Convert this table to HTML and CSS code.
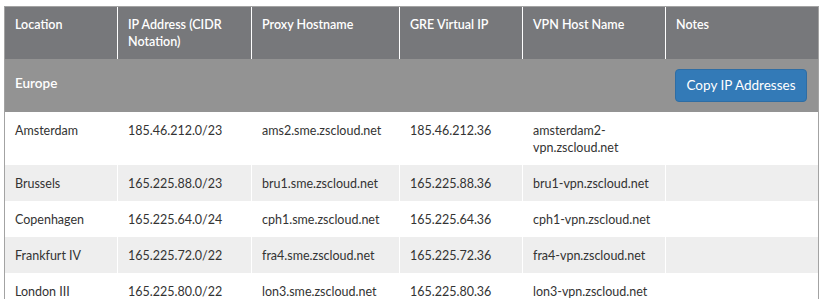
FILE: index.html
```html
<!DOCTYPE html>
<html>
<head>
<meta charset="utf-8">
<link rel="stylesheet" href="styles.css">
</head>
<body>
<div class="wrap">
<table class="ip-table">
  <colgroup>
    <col class="c1"><col class="c2"><col class="c3"><col class="c4"><col class="c5"><col class="c6">
  </colgroup>
  <thead>
    <tr>
      <th>Location</th>
      <th>IP Address (CIDR Notation)</th>
      <th>Proxy Hostname</th>
      <th>GRE Virtual IP</th>
      <th>VPN Host Name</th>
      <th>Notes</th>
    </tr>
  </thead>
  <tbody>
    <tr class="region">
      <td colspan="5" class="region-name">Europe</td>
      <td class="region-action"><button class="copy-btn">Copy IP Addresses</button></td>
    </tr>
    <tr>
      <td>Amsterdam</td><td>185.46.212.0/23</td><td>ams2.sme.zscloud.net</td><td>185.46.212.36</td><td>amsterdam2-<br>vpn.zscloud.net</td><td></td>
    </tr>
    <tr class="alt">
      <td>Brussels</td><td>165.225.88.0/23</td><td>bru1.sme.zscloud.net</td><td>165.225.88.36</td><td>bru1-vpn.zscloud.net</td><td></td>
    </tr>
    <tr>
      <td>Copenhagen</td><td>165.225.64.0/24</td><td>cph1.sme.zscloud.net</td><td>165.225.64.36</td><td>cph1-vpn.zscloud.net</td><td></td>
    </tr>
    <tr class="alt">
      <td>Frankfurt IV</td><td>165.225.72.0/22</td><td>fra4.sme.zscloud.net</td><td>165.225.72.36</td><td>fra4-vpn.zscloud.net</td><td></td>
    </tr>
    <tr>
      <td>London III</td><td>165.225.80.0/22</td><td>lon3.sme.zscloud.net</td><td>165.225.80.36</td><td>lon3-vpn.zscloud.net</td><td></td>
    </tr>
  </tbody>
</table>
</div>
</body>
</html>
```
FILE: styles.css
```css
html, body {
  margin: 0;
  padding: 0;
  background: #ffffff;
  overflow: hidden;
}
.wrap {
  padding: 6px 0 0 4px;
}
.ip-table {
  width: 815px;
  table-layout: fixed;
  border-collapse: separate;
  border-spacing: 0;
  border: 1px solid #a3a3a3;
  border-bottom: none;
  font-family: "Lato", "Liberation Sans", sans-serif;
  font-size: 12.5px;
  color: #333333;
}
.c1 { width: 112px; }
.c2 { width: 134px; }
.c3 { width: 148px; }
.c4 { width: 123px; }
.c5 { width: 143px; }
.c6 { width: 153px; }
.ip-table th,
.ip-table td {
  text-align: left;
  vertical-align: top;
  line-height: 17px;
  border-left: 1px solid #ffffff;
}
.ip-table th:first-child,
.ip-table td:first-child {
  border-left: none;
}
.ip-table th {
  background: #77787b;
  color: #ffffff;
  font-weight: 600;
  padding: 9px 10px 9px 10px;
}
.ip-table td {
  padding: 10px 10px 9px 10px;
}
.region td {
  background: #939393;
  color: #ffffff;
  border-left: none;
  padding: 10px 10px 10px 10px;
}
.region .region-name {
  font-size: 13.5px;
  font-weight: 600;
  padding-top: 16px;
}
.region .region-action {
  padding-right: 10px;
}
.alt td {
  background: #eeeeee;
}
.copy-btn {
  display: block;
  width: 132px;
  height: 33px;
  padding: 0;
  background: #337ab7;
  border: 1px solid #2e6da4;
  border-radius: 4px;
  color: #ffffff;
  font-family: "Lato", "Liberation Sans", sans-serif;
  font-size: 13.5px;
  line-height: 31px;
  text-align: center;
}
```
